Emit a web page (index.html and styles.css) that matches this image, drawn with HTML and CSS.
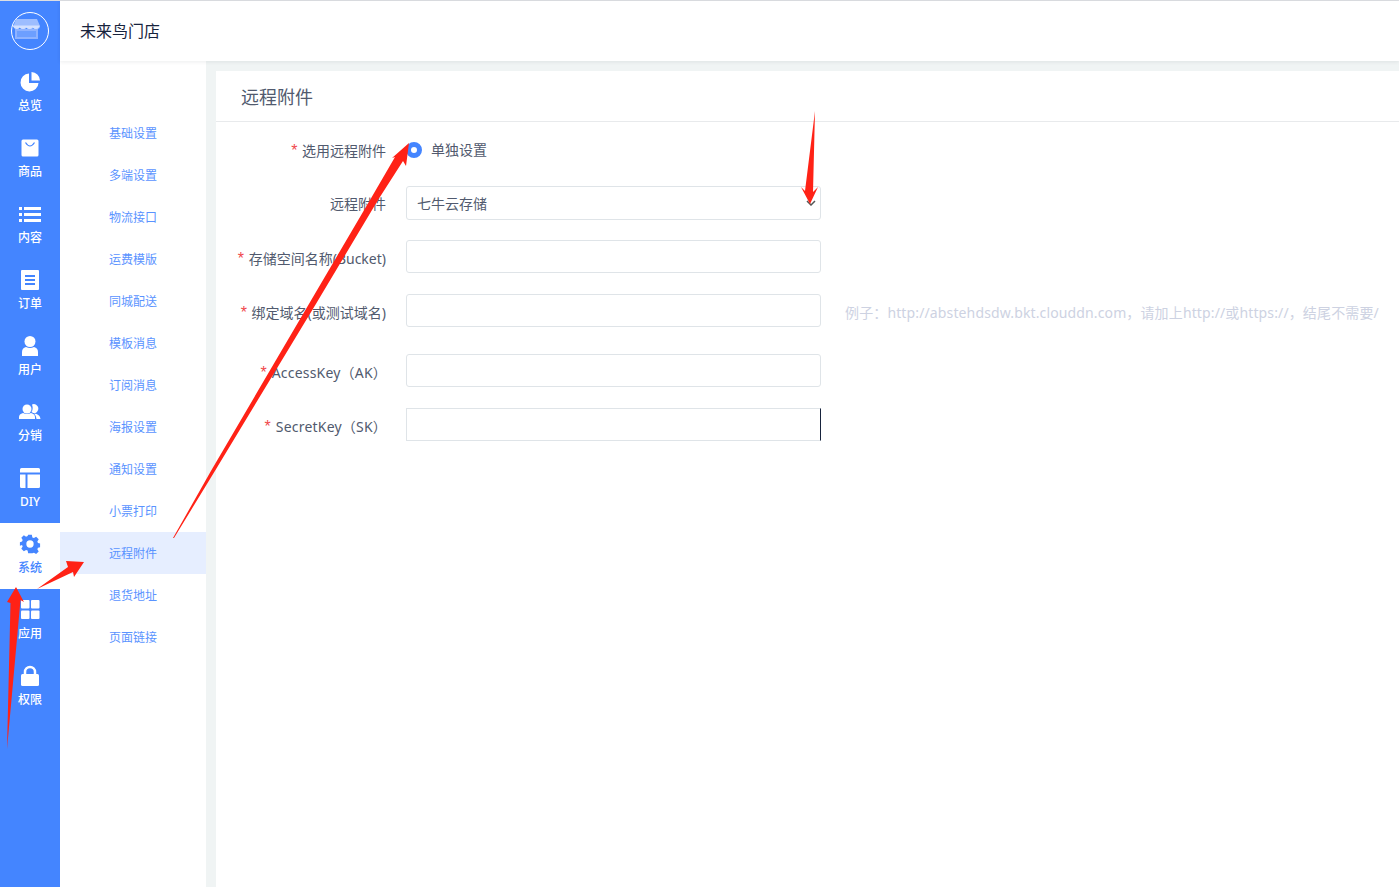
FILE: index.html
```html
<!DOCTYPE html>
<html lang="zh">
	<head>
		<title>远程附件</title>
		<meta charset="utf-8">
		<link rel="stylesheet" href="styles.css">
	</head>
	<body>
		<div class="app">
			<div class="sidebar">
				<div class="logo">
					<svg viewBox="0 0 38 38" width="38" height="38">
						<circle cx="19" cy="19" r="18.500" fill="none" stroke="#fff" stroke-width="1"/>
						<path d="M5 18v8h21v-8z" fill="#6d9fff" stroke="#8fb3ff" stroke-width="2"/>
						<path d="M5 7h21l3 7q0 3-3 3t-3-1.500q-1.500 1.500-3.500 1.500t-3.500-1.500q-1.500 1.500-3.500 1.500t-3.500-1.500q-1.500 1.500-3.500 1.500t-3-3z" fill="#9dbdff"/>
						<path d="M2 14.500q1.500 2.500 3.500 2.500t3-1.500q1.500 1.500 3.500 1.500t3-1.500q1.500 1.500 3.500 1.500t3-1.500q1.500 1.500 3.500 1.500t3.500-2.500v-1H2z" fill="#d2e0ff"/>
					</svg>
				</div>
				<a class="nav-item">
					<svg viewBox="0 0 22 22" width="22" height="22"><path d="M10 2.500a9 9 0 1 0 9.500 9.500h-9.500z M12.500 1a9 9 0 0 1 8.500 8.500h-8.500z" fill="#fff"/></svg>
					<span>总览</span>
				</a>
				<a class="nav-item">
					<svg viewBox="0 0 22 22" width="22" height="22"><rect x="2.500" y="2.500" width="17" height="17" rx="1.500" fill="#fff"/><path d="M6.500 5.500q4.500 7 9 0" fill="none" stroke="#4485ff" stroke-width="1.200"/></svg>
					<span>商品</span>
				</a>
				<a class="nav-item">
					<svg viewBox="0 0 22 22" width="22" height="22"><path d="M0 4h3v3H0z M5 4h17v3H5z M0 10h3v3H0z M5 10h17v3H5z M0 16h3v3H0z M5 16h17v3H5z" fill="#fff"/></svg>
					<span>内容</span>
				</a>
				<a class="nav-item">
					<svg viewBox="0 0 22 22" width="22" height="22"><rect x="2" y="1" width="18" height="20" rx="1" fill="#fff"/><path d="M6 6h10v2H6z M6 10h10v2H6z M6 14h10v2H6z" fill="#4485ff"/></svg>
					<span>订单</span>
				</a>
				<a class="nav-item">
					<svg viewBox="0 0 22 22" width="22" height="22"><circle cx="11" cy="6.500" r="5.500" fill="#fff"/><path d="M3 21v-4q0-4 4-5q4 2 8 0q4 1 4 5v4z" fill="#fff"/></svg>
					<span>用户</span>
				</a>
				<a class="nav-item">
					<svg viewBox="0 0 22 22" width="22" height="22"><circle cx="8" cy="8" r="4.500" fill="#fff"/><path d="M0 18v-2q0-3 4-4q4 2 8 0q4 1 4 4v2z" fill="#fff"/><path d="M13 3.500a4.500 4.500 0 1 1 1 8.500q-1-1-1.500-1q2-3 .5-7.500z M15 12.500q6 .5 6.500 5.500h-4q0-3-2.500-5.500z" fill="#fff"/></svg>
					<span>分销</span>
				</a>
				<a class="nav-item">
					<svg viewBox="0 0 22 22" width="22" height="22"><path d="M2.500 1h17a1.500 1.500 0 0 1 1.500 1.500v3H1v-3A1.500 1.500 0 0 1 2.500 1z M1 7.500h5.500V21h-4A1.500 1.500 0 0 1 1 19.500z M8.500 7.500H21v12a1.500 1.500 0 0 1-1.500 1.500h-11z" fill="#fff"/></svg>
					<span>DIY</span>
				</a>
				<a class="nav-item nav-item-active">
					<svg viewBox="-1 -1 24 24" width="22" height="22"><path fill-rule="evenodd" d="M9 1h4l.6 2.800 1.700.7 2.400-1.500 2.800 2.800-1.500 2.400.7 1.700 2.300.6v4l-2.300.6-.7 1.700 1.500 2.400-2.800 2.800-2.400-1.500-1.700.7L13 21H9l-.6-2.800-1.700-.7-2.400 1.500-2.800-2.800 1.500-2.400-.7-1.700L0 13V9l2.300-.6.7-1.700-1.500-2.400 2.800-2.800 2.400 1.500 1.700-.7z M11 7a4 4 0 1 0 0 8 4 4 0 0 0 0-8z" fill="#4485ff"/></svg>
					<span>系统</span>
				</a>
				<a class="nav-item">
					<svg viewBox="0 0 22 22" width="22" height="22"><rect x="2" y="1" width="8.500" height="8.500" rx="1" fill="#fff"/><rect x="12" y="1" width="8.500" height="8.500" rx="1" fill="#fff"/><rect x="2" y="11.500" width="8.500" height="8.500" rx="1" fill="#fff"/><rect x="12" y="11.500" width="8.500" height="8.500" rx="1" fill="#fff"/></svg>
					<span>应用</span>
				</a>
				<a class="nav-item">
					<svg viewBox="0 0 22 22" width="22" height="22"><path d="M6 10V7a5 5 0 0 1 10 0v3" fill="none" stroke="#fff" stroke-width="2.500"/><rect x="2" y="9" width="18" height="12" rx="1.500" fill="#fff"/></svg>
					<span>权限</span>
				</a>
			</div>
			<div class="content">
				<div class="topbar">未来鸟门店</div>
				<div class="body">
					<div class="subnav">
						<a class="subnav-item">基础设置</a>
						<a class="subnav-item">多端设置</a>
						<a class="subnav-item">物流接口</a>
						<a class="subnav-item">运费模版</a>
						<a class="subnav-item">同城配送</a>
						<a class="subnav-item">模板消息</a>
						<a class="subnav-item">订阅消息</a>
						<a class="subnav-item">海报设置</a>
						<a class="subnav-item">通知设置</a>
						<a class="subnav-item">小票打印</a>
						<a class="subnav-item subnav-item-active">远程附件</a>
						<a class="subnav-item">退货地址</a>
						<a class="subnav-item">页面链接</a>
					</div>
					<div class="panel">
						<div class="panel-title">远程附件</div>
						<div class="form">
							<div class="row row-radio">
								<label class="row-label"><i>*</i> 选用远程附件</label>
								<span class="radio"></span>
								<span class="radio-text">单独设置</span>
							</div>
							<div class="row">
								<label class="row-label">远程附件</label>
								<div class="field field-select">七牛云存储
									<svg class="chevron" viewBox="0 0 10 6" width="10" height="6"><path d="M1 1l4 4 4-4" fill="none" stroke="#555" stroke-width="1.500"/></svg>
								</div>
							</div>
							<div class="row row-low">
								<label class="row-label"><i>*</i> 存储空间名称(Bucket)</label>
								<div class="field"></div>
							</div>
							<div class="row row-low row-wide">
								<label class="row-label"><i>*</i> 绑定域名(或测试域名)</label>
								<div class="field"></div>
								<span class="hint">例子：http://abstehdsdw.bkt.clouddn.com，请加上http://或https://，结尾不需要/</span>
							</div>
							<div class="row row-low">
								<label class="row-label row-label-key"><i>*</i> AccessKey（AK）</label>
								<div class="field"></div>
							</div>
							<div class="row row-low">
								<label class="row-label row-label-key"><i>*</i> SecretKey（SK）</label>
								<div class="field field-caret"></div>
							</div>
						</div>
					</div>
				</div>
			</div>
		</div>
		<!-- red arrows drawn on top of the screenshot -->
		<svg class="arrows" viewBox="0 0 1399 887" width="1399" height="887">
			<path d="M7 749L10.500 603L7 602L16 587L24 602L20.500 600z" fill="#ff2216"/>
			<path d="M37 589L68 567L66 561L84 562L74 577L73 572z" fill="#ff2216"/>
			<path d="M173 538L211.500 470L309.500 303L370 200L395 157L392 158L409 143L406 166L403 161L378 200L316.500 303L215.500 470L174 538z" fill="#ff2216"/>
			<path d="M815 111L805 191L801 187L810 204L818 187L813 192z" fill="#ff2216"/>
		</svg>
	</body>
</html>
```

FILE: styles.css
```css
html, body {
	width: 100%;
	height: 100%;
}
body {
	margin: 0;
	overflow: hidden;
	background-color: #ffffff;
	font-family: "Noto Sans", "Noto Sans CJK SC", sans-serif;
	font-size: 14px;
	color: #515a6e;
}
.app {
	display: flex;
	height: 886px;
	border-top: 1px solid #dcdee2;
}
.arrows {
	position: absolute;
	left: 0;
	top: 0;
	pointer-events: none;
}

/* blue icon column */
.sidebar {
	width: 60px;
	flex: none;
	background-color: #4485ff;
}
.logo {
	height: 60px;
	display: flex;
	align-items: center;
	justify-content: center;
}
.nav-item {
	height: 66px;
	padding-top: 10px;
	box-sizing: border-box;
	display: flex;
	flex-direction: column;
	align-items: center;
	color: #ffffff;
	font-size: 12px;
	font-weight: 500;
	line-height: 16px;
}
.nav-item span {
	margin-top: 5px;
}
.nav-item-active {
	background-color: #ffffff;
	color: #4485ff;
}

.content {
	flex: 1;
	display: flex;
	flex-direction: column;
	min-width: 0;
}
.topbar {
	height: 60px;
	flex: none;
	box-sizing: border-box;
	display: flex;
	align-items: center;
	padding: 0 0 2px 20px;
	font-size: 16px;
	color: #17233d;
	box-shadow: 0 1px 4px rgba(0,21,41,0.08);
	position: relative;
}
.body {
	flex: 1;
	display: flex;
	background-color: #f0f4f4;
}

/* second level menu */
.subnav {
	width: 146px;
	flex: none;
	padding-top: 51px;
	background-color: #ffffff;
}
.subnav-item {
	display: block;
	height: 42px;
	line-height: 44px;
	text-align: center;
	font-size: 12px;
	color: #5a93ff;
}
.subnav-item-active {
	background-color: #e6eeff;
}

.panel {
	flex: 1;
	margin: 10px 0 0 10px;
	background-color: #ffffff;
}
.panel-title {
	height: 50px;
	line-height: 52px;
	padding-left: 25px;
	font-size: 18px;
	color: #515a6e;
	border-bottom: 1px solid #e8eaec;
}
.form {
	padding-top: 11px;
}
.row {
	display: flex;
	align-items: center;
	height: 33px;
	margin-bottom: 21px;
}
.row-radio {
	height: 34px;
	margin-bottom: 19px;
}
.row-wide {
	margin-bottom: 27px;
}
.row-low .row-label {
	padding-top: 2px;
}
.row-label {
	width: 170px;
	margin-right: 20px;
	text-align: right;
	white-space: nowrap;
	font-size: 14px;
}
.row-label-key {
	width: 171px;
	margin-right: 19px;
	letter-spacing: 0.2px;
}
.row-label i {
	font-style: normal;
	font-family: "Liberation Sans", sans-serif;
	font-size: 16px;
	margin-right: 1px;
	color: #f0484c;
}
.radio {
	width: 16px;
	height: 16px;
	box-sizing: border-box;
	border: 5px solid #4485ff;
	border-radius: 50%;
	background-color: #ffffff;
}
.radio-text {
	margin-left: 9px;
	padding-bottom: 2px;
}
.field {
	width: 415px;
	height: 33px;
	box-sizing: border-box;
	border: 1px solid #dfe4e8;
	border-radius: 3px;
	padding-left: 10px;
	line-height: 32px;
	position: relative;
}
.field-select {
	height: 34px;
	line-height: 34px;
}
.chevron {
	position: absolute;
	right: 4px;
	top: 13px;
}
.field-caret {
	border-right-color: #17233d;
	border-radius: 0;
}
.hint {
	margin-left: 24px;
	padding-top: 2px;
	white-space: nowrap;
	letter-spacing: 0.13px;
	color: #cdd2e2;
}
```
